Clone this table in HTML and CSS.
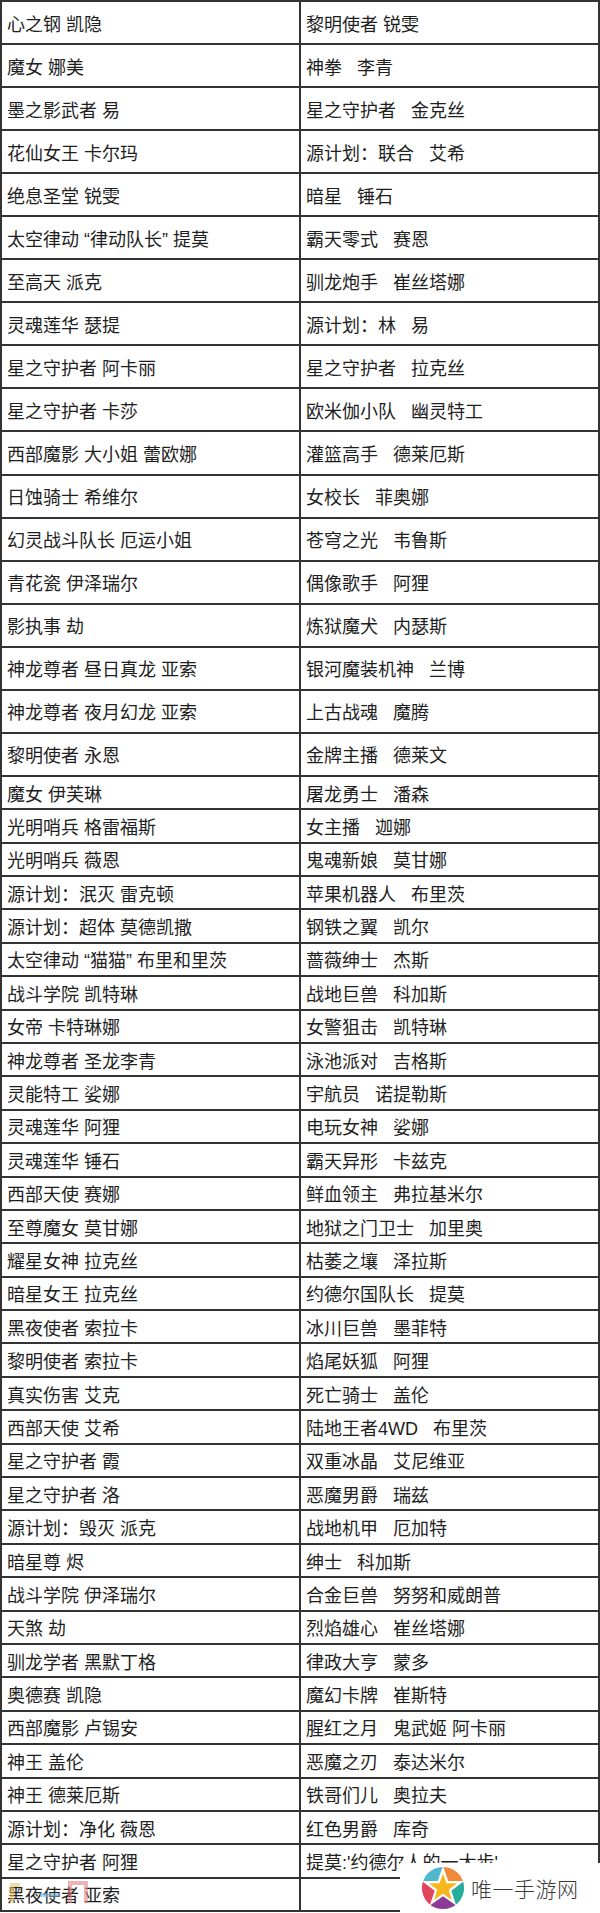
FILE: index.html
```html
<!DOCTYPE html>
<html lang="zh-CN">
<head>
<meta charset="utf-8">
<title>皮肤列表</title>
<link rel="stylesheet" href="styles.css">
</head>
<body>
<div class="sheet">
  <div class="grid">
    <div class="cell tall">心之钢 凯隐</div><div class="cell tall">黎明使者 锐雯</div>
    <div class="cell tall">魔女 娜美</div><div class="cell tall">神拳   李青</div>
    <div class="cell tall">墨之影武者 易</div><div class="cell tall">星之守护者   金克丝</div>
    <div class="cell tall">花仙女王 卡尔玛</div><div class="cell tall">源计划：联合   艾希</div>
    <div class="cell tall">绝息圣堂 锐雯</div><div class="cell tall">暗星   锤石</div>
    <div class="cell tall">太空律动 “律动队长” 提莫</div><div class="cell tall">霸天零式   赛恩</div>
    <div class="cell tall">至高天 派克</div><div class="cell tall">驯龙炮手   崔丝塔娜</div>
    <div class="cell tall">灵魂莲华 瑟提</div><div class="cell tall">源计划：林   易</div>
    <div class="cell tall">星之守护者 阿卡丽</div><div class="cell tall">星之守护者   拉克丝</div>
    <div class="cell tall">星之守护者 卡莎</div><div class="cell tall">欧米伽小队   幽灵特工</div>
    <div class="cell tall">西部魔影 大小姐 蕾欧娜</div><div class="cell tall">灌篮高手   德莱厄斯</div>
    <div class="cell tall">日蚀骑士 希维尔</div><div class="cell tall">女校长   菲奥娜</div>
    <div class="cell tall">幻灵战斗队长 厄运小姐</div><div class="cell tall">苍穹之光   韦鲁斯</div>
    <div class="cell tall">青花瓷 伊泽瑞尔</div><div class="cell tall">偶像歌手   阿狸</div>
    <div class="cell tall">影执事 劫</div><div class="cell tall">炼狱魔犬   内瑟斯</div>
    <div class="cell tall">神龙尊者 昼日真龙 亚索</div><div class="cell tall">银河魔装机神   兰博</div>
    <div class="cell tall">神龙尊者 夜月幻龙 亚索</div><div class="cell tall">上古战魂   魔腾</div>
    <div class="cell tall">黎明使者 永恩</div><div class="cell tall">金牌主播   德莱文</div>
    <div class="cell">魔女 伊芙琳</div><div class="cell">屠龙勇士   潘森</div>
    <div class="cell">光明哨兵 格雷福斯</div><div class="cell">女主播   迦娜</div>
    <div class="cell">光明哨兵 薇恩</div><div class="cell">鬼魂新娘   莫甘娜</div>
    <div class="cell">源计划：泯灭 雷克顿</div><div class="cell">苹果机器人   布里茨</div>
    <div class="cell">源计划：超体 莫德凯撒</div><div class="cell">钢铁之翼   凯尔</div>
    <div class="cell">太空律动 “猫猫” 布里和里茨</div><div class="cell">蔷薇绅士   杰斯</div>
    <div class="cell">战斗学院 凯特琳</div><div class="cell">战地巨兽   科加斯</div>
    <div class="cell">女帝 卡特琳娜</div><div class="cell">女警狙击   凯特琳</div>
    <div class="cell">神龙尊者 圣龙李青</div><div class="cell">泳池派对   吉格斯</div>
    <div class="cell">灵能特工 娑娜</div><div class="cell">宇航员   诺提勒斯</div>
    <div class="cell">灵魂莲华 阿狸</div><div class="cell">电玩女神   娑娜</div>
    <div class="cell">灵魂莲华 锤石</div><div class="cell">霸天异形   卡兹克</div>
    <div class="cell">西部天使 赛娜</div><div class="cell">鲜血领主   弗拉基米尔</div>
    <div class="cell">至尊魔女 莫甘娜</div><div class="cell">地狱之门卫士   加里奥</div>
    <div class="cell">耀星女神 拉克丝</div><div class="cell">枯萎之壤   泽拉斯</div>
    <div class="cell">暗星女王 拉克丝</div><div class="cell">约德尔国队长   提莫</div>
    <div class="cell">黑夜使者 索拉卡</div><div class="cell">冰川巨兽   墨菲特</div>
    <div class="cell">黎明使者 索拉卡</div><div class="cell">焰尾妖狐   阿狸</div>
    <div class="cell">真实伤害 艾克</div><div class="cell">死亡骑士   盖伦</div>
    <div class="cell">西部天使 艾希</div><div class="cell">陆地王者4WD   布里茨</div>
    <div class="cell">星之守护者 霞</div><div class="cell">双重冰晶   艾尼维亚</div>
    <div class="cell">星之守护者 洛</div><div class="cell">恶魔男爵   瑞兹</div>
    <div class="cell">源计划：毁灭 派克</div><div class="cell">战地机甲   厄加特</div>
    <div class="cell">暗星尊 烬</div><div class="cell">绅士   科加斯</div>
    <div class="cell">战斗学院 伊泽瑞尔</div><div class="cell">合金巨兽   努努和威朗普</div>
    <div class="cell">天煞 劫</div><div class="cell">烈焰雄心   崔丝塔娜</div>
    <div class="cell">驯龙学者 黑默丁格</div><div class="cell">律政大亨   蒙多</div>
    <div class="cell">奥德赛 凯隐</div><div class="cell">魔幻卡牌   崔斯特</div>
    <div class="cell">西部魔影 卢锡安</div><div class="cell">腥红之月   鬼武姬 阿卡丽</div>
    <div class="cell">神王 盖伦</div><div class="cell">恶魔之刃   泰达米尔</div>
    <div class="cell">神王 德莱厄斯</div><div class="cell">铁哥们儿   奥拉夫</div>
    <div class="cell">源计划：净化 薇恩</div><div class="cell">红色男爵   库奇</div>
    <div class="cell">星之守护者 阿狸</div><div class="cell">提莫:'约德尔人的一大步'</div>
    <div class="cell">黑夜使者 亚索</div><div class="cell"></div>
  </div>

  <div class="wm-frag" aria-hidden="true">
    <span class="frag frag-y"></span>
    <span class="frag frag-b"></span>
    <span class="frag frag-r"></span>
  </div>

  <div class="wm-box">
    <svg class="wm-logo" viewBox="-50 -50 100 100" width="44" height="44" aria-hidden="true">
      <defs>
        <clipPath id="c"><circle r="48"/></clipPath>
      </defs>
      <g clip-path="url(#c)">
        <path d="M0 0 L0 -60 L-57 -18.5 Z" fill="#4fb8cf"/>
        <path d="M0 0 L0 -60 L57 -18.5 Z" fill="#f08a3a"/>
        <path d="M0 0 L57 -18.5 L35 48.5 Z" fill="#27ad9c"/>
        <path d="M0 0 L35 48.5 L-35 48.5 Z" fill="#8b3a95"/>
        <path d="M0 0 L-35 48.5 L-57 -18.5 Z" fill="#e0455c"/>
      </g>
      <polygon points="0,-50 12,-16 48,-16 19,6 30,40 0,19 -30,40 -19,6 -48,-16 -12,-16" fill="#fff"/>
      <polygon points="0,-33 8,-11 32,-11 13,4 20,27 0,13 -20,27 -13,4 -32,-11 -8,-11" fill="#f7b81f"/>
    </svg>
    <span class="wm-text">唯一手游网</span>
  </div>
</div>
</body>
</html>
```
FILE: styles.css
```css
html, body {
  margin: 0;
  padding: 0;
  background: #ffffff;
}

.sheet {
  position: relative;
  width: 600px;
  height: 1913px;
  overflow: hidden;
}

.grid {
  display: grid;
  grid-template-columns: 1fr 1fr;
  border-top: 2px solid #333;
  border-left: 2px solid #333;
  font-family: "Liberation Sans", "Noto Sans CJK SC", sans-serif;
  font-size: 18px;
  color: #1e1e1e;
}

.cell {
  box-sizing: border-box;
  height: 33.4px;
  border-right: 2px solid #333;
  border-bottom: 2px solid #333;
  display: flex;
  align-items: center;
  padding-left: 5px;
  white-space: pre;
  overflow: hidden;
}

.cell.tall {
  height: 43.05px;
}

/* watermark box bottom right */
.wm-box {
  position: absolute;
  left: 400px;
  top: 1863px;
  width: 200px;
  height: 50px;
  background: #ffffff;
  display: flex;
  align-items: center;
  gap: 6px;
  padding-left: 21px;
  box-sizing: border-box;
}

.wm-logo {
  flex: none;
}

.wm-text {
  font-family: "Noto Sans CJK SC", sans-serif;
  font-size: 21px;
  font-weight: 300;
  color: #3a3a3a;
  letter-spacing: 0.5px;
}

/* faint watermark fragments bottom left */
.wm-frag {
  position: absolute;
  left: 0;
  top: 1881px;
  width: 100px;
  height: 30px;
  pointer-events: none;
}

.frag {
  position: absolute;
  display: block;
  opacity: 0.55;
}

.frag-y {
  left: 10px;
  top: 2px;
  width: 10px;
  height: 20px;
  border-top: 4px solid #e9c25a;
  border-left: 4px solid #e9c25a;
  box-sizing: border-box;
}

.frag-b {
  left: 40px;
  top: 12px;
  width: 20px;
  height: 4px;
  background: #6fb2e0;
}

.frag-r {
  left: 68px;
  top: 0;
  width: 20px;
  height: 22px;
  border-top: 4px solid #e07a7a;
  border-left: 4px solid #e07a7a;
  border-right: 4px solid #e07a7a;
  box-sizing: border-box;
}
```
